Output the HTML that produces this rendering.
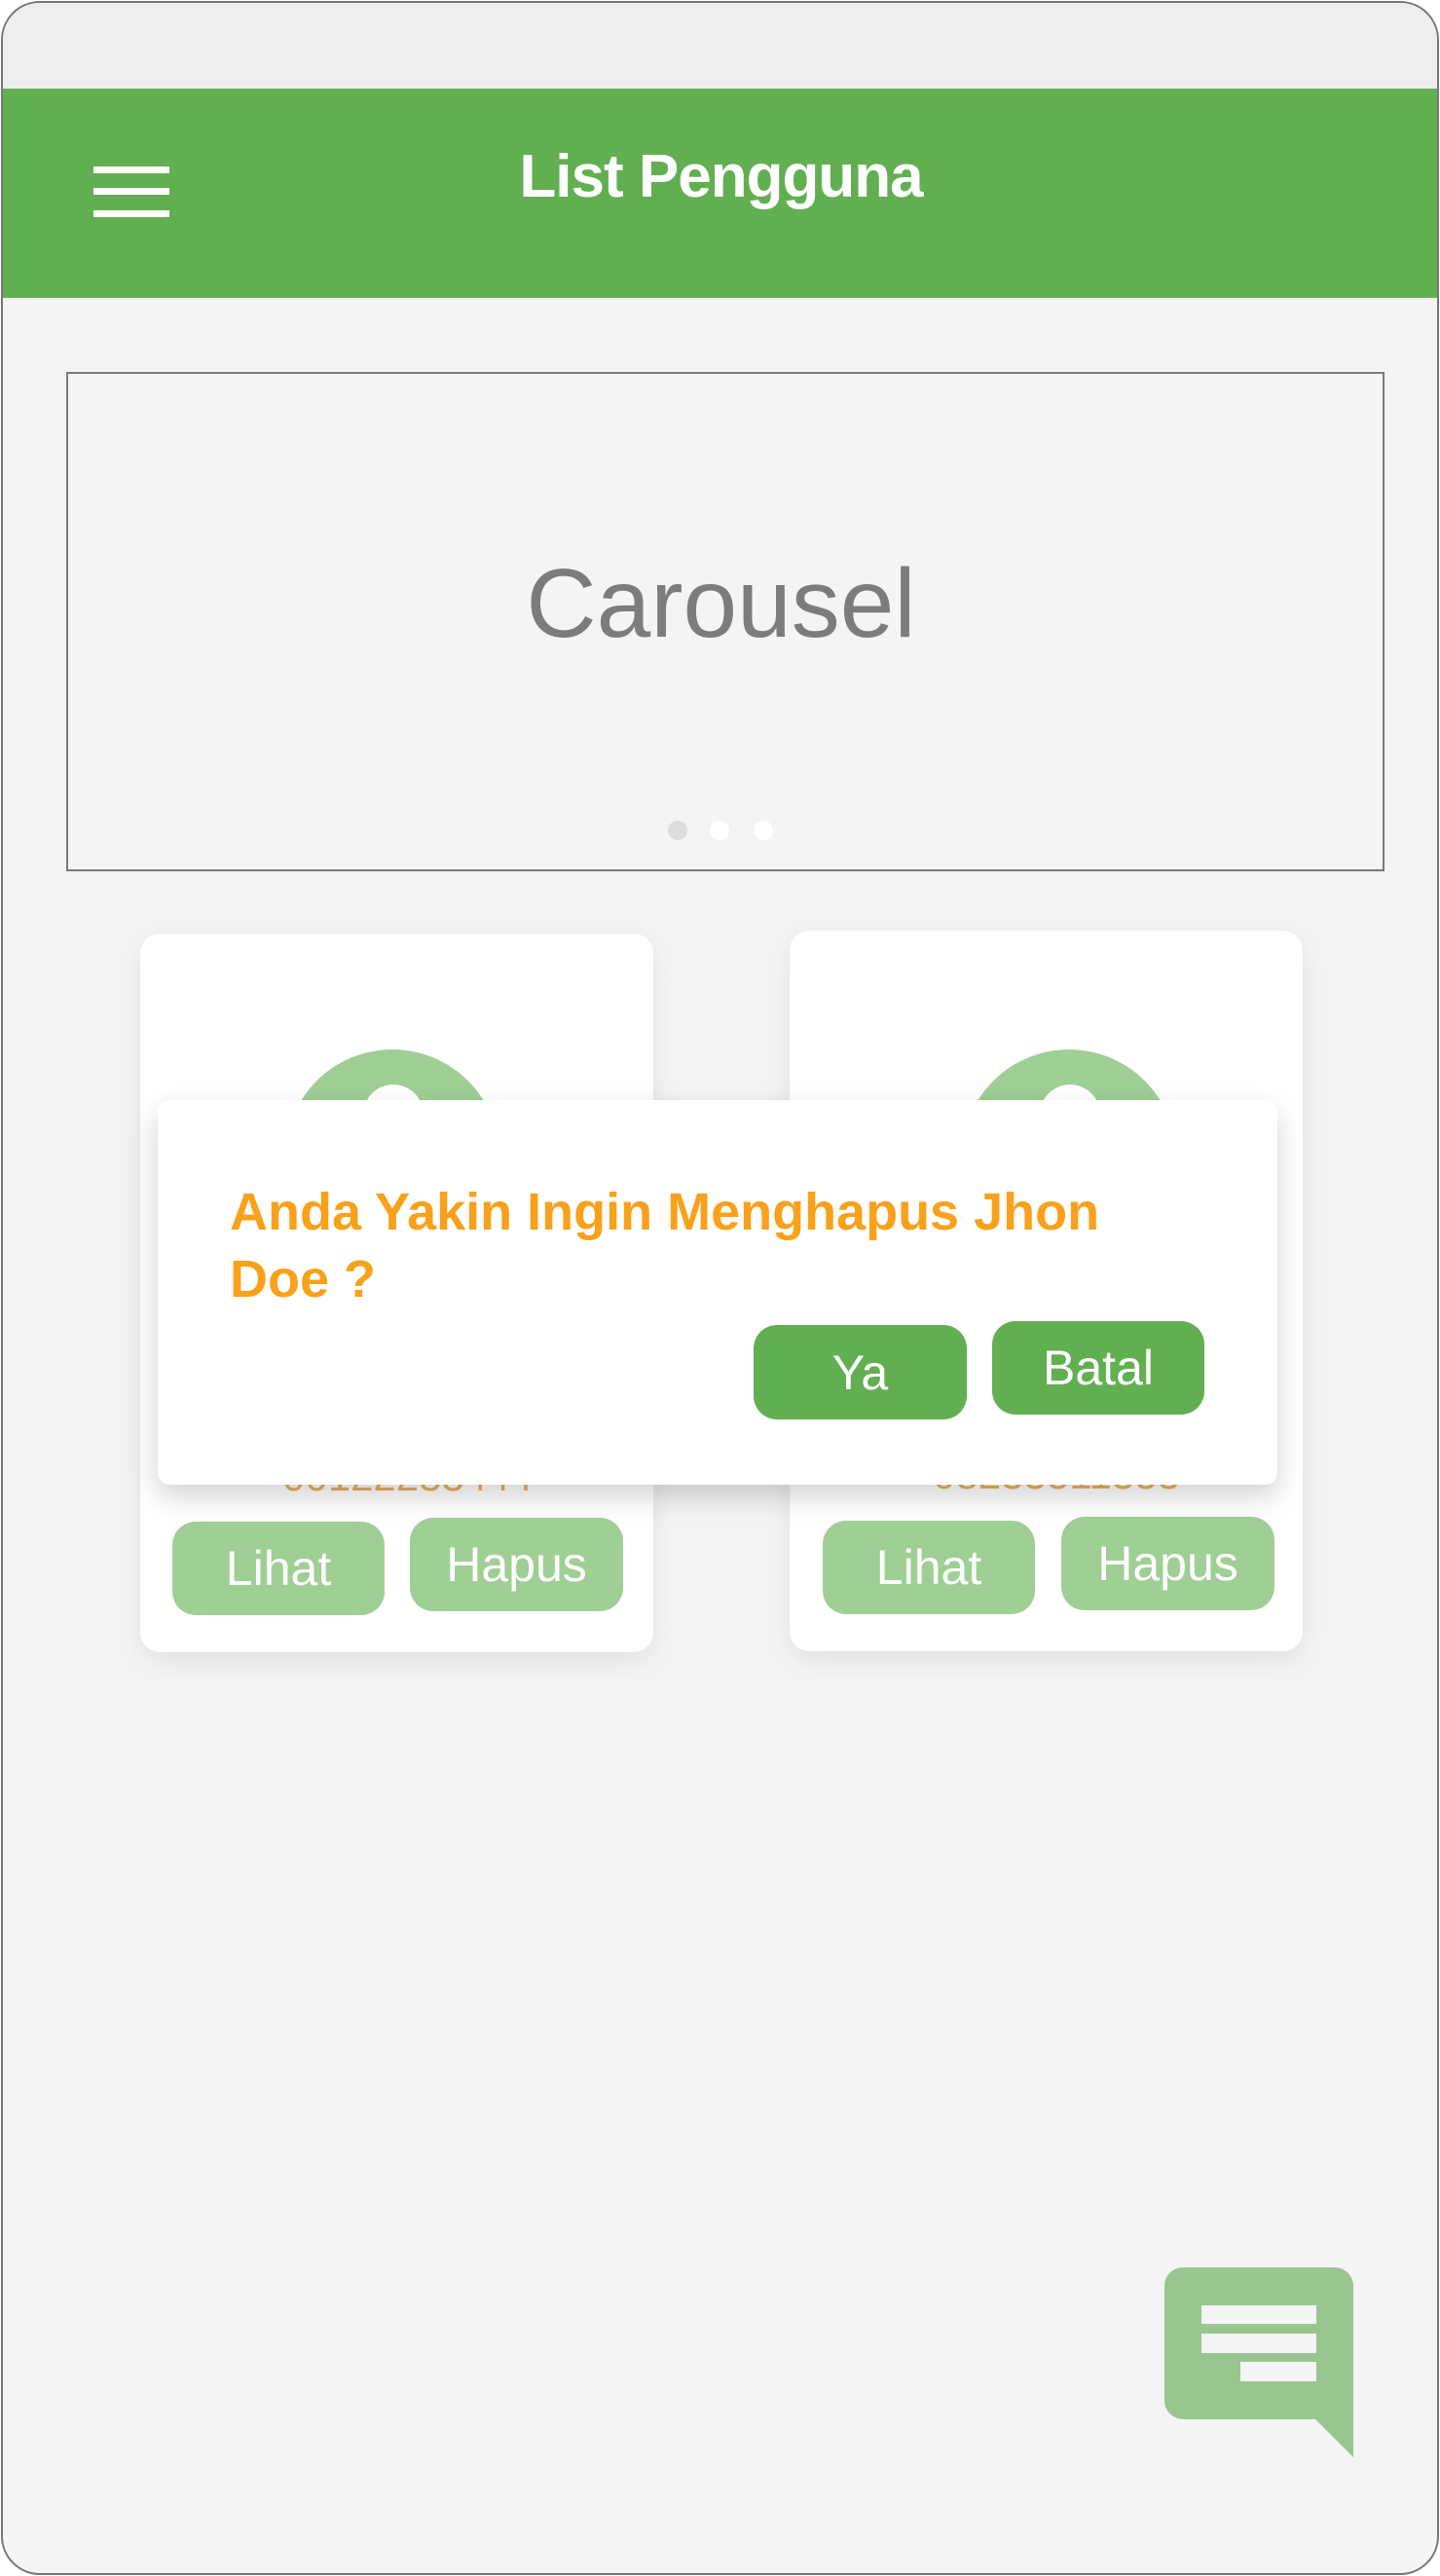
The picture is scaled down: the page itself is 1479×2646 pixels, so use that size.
<!DOCTYPE html>
<html><head><meta charset="utf-8"><style>
*{margin:0;padding:0;box-sizing:border-box}
body{width:1479px;height:2646px;background:#fff;font-family:"Liberation Sans",sans-serif;position:relative;overflow:hidden}
.frame{position:absolute;left:1px;top:1px;width:1477px;height:2644px;border:2px solid #777;border-radius:40px;background:#f4f4f4;overflow:hidden}
.abs{position:absolute}
.top{left:0;top:0;width:100%;height:88px;background:#eeeeee}
.hdr{left:0;top:88px;width:100%;height:215px;background:#62af52}
.bar{left:93px;width:78px;height:7px;background:#fff}
.title{left:0;width:1475px;top:143px;text-align:center;color:#fff;font-size:62px;font-weight:bold;letter-spacing:-1px}
.car{left:65px;top:379px;width:1354px;height:513px;border:2px solid #7a7a7a}
.cartxt{left:0;width:1475px;top:560px;text-align:center;color:#7d7b7c;font-size:100px}
.dot{width:20px;height:20px;border-radius:50%;top:840px}
.card{background:#fff;border-radius:20px;box-shadow:0 10px 30px rgba(0,0,0,.08)}
.av{width:220px;height:220px;border-radius:50%;background:#9fcf95}
.head{width:62px;height:62px;border-radius:50%;background:#fff}
.btn{border-radius:24px;color:#fff;font-size:50px;display:flex;align-items:center;justify-content:center;font-weight:500}
.lt{background:#9fcf95}
.dk{background:#62af52}
.phone{color:#e8b060;font-size:42px}
.dlg{left:159px;top:1127px;width:1150px;height:395px;background:#fff;border-radius:12px;box-shadow:0 12px 30px rgba(0,0,0,.18)}
.q{left:233px;top:1208px;width:1000px;color:#f9a11b;font-size:54px;line-height:69px;font-weight:bold}
</style></head><body>
<div class="frame">
<div class="abs top"></div>
<div class="abs hdr"></div>
<div class="abs bar" style="top:168px"></div>
<div class="abs bar" style="top:190px"></div>
<div class="abs bar" style="top:213px"></div>
<div class="abs title">List Pengguna</div>
<div class="abs car"></div>
<div class="abs cartxt">Carousel</div>
<div class="abs dot" style="left:683px;background:#dcdcdc"></div>
<div class="abs dot" style="left:726px;background:#fff"></div>
<div class="abs dot" style="left:771px;background:#fff"></div>

<div class="abs card" style="left:141px;top:956px;width:527px;height:738px"></div>
<div class="abs card" style="left:808px;top:953px;width:527px;height:740px"></div>
<div class="abs av" style="left:290px;top:1075px"></div>
<div class="abs head" style="left:370px;top:1111px"></div>
<div class="abs av" style="left:985px;top:1075px"></div>
<div class="abs head" style="left:1065px;top:1111px"></div>
<div class="abs phone" style="left:287px;top:1490px">00122233444</div>
<div class="abs phone" style="left:955px;top:1488px">08233311333</div>
<div class="abs btn lt" style="left:174px;top:1560px;width:218px;height:96px">Lihat</div>
<div class="abs btn lt" style="left:418px;top:1556px;width:219px;height:96px">Hapus</div>
<div class="abs btn lt" style="left:842px;top:1559px;width:218px;height:96px">Lihat</div>
<div class="abs btn lt" style="left:1087px;top:1555px;width:219px;height:96px">Hapus</div>

<div class="abs dlg"></div>
<div class="abs q">Anda Yakin Ingin Menghapus Jhon Doe ?</div>
<div class="abs btn dk" style="left:771px;top:1358px;width:219px;height:97px">Ya</div>
<div class="abs btn dk" style="left:1016px;top:1354px;width:218px;height:96px">Batal</div>

<svg class="abs" style="left:0;top:0" width="1479" height="2646">
<path d="M1212 2326 H1368 A19 19 0 0 1 1387 2345 V2521 L1348 2482 H1212 A19 19 0 0 1 1193 2463 V2345 A19 19 0 0 1 1212 2326 Z" fill="#99c590"/>
<rect x="1231" y="2365" width="118" height="19" fill="#f4f4f4"/>
<rect x="1231" y="2394" width="118" height="20" fill="#f4f4f4"/>
<rect x="1271" y="2423" width="78" height="20" fill="#f4f4f4"/>
</svg>
</div>
</body></html>
